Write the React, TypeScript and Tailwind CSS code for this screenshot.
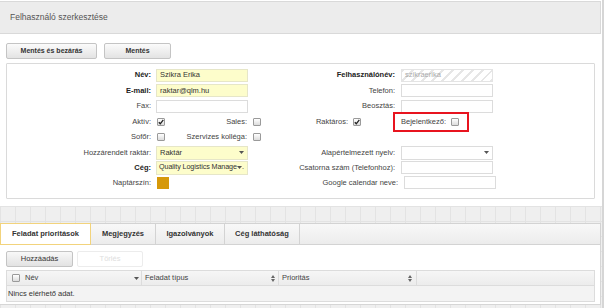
import React from "react";

const Check = ({ checked = false }: { checked?: boolean }) => (
  <span className="inline-flex items-center justify-center w-[8px] h-[8px] border border-[#9a9a9a] rounded-[1px] bg-gradient-to-b from-white to-[#dcdcdc] shrink-0">
    {checked && (
      <svg width="6" height="6" viewBox="0 0 6 6">
        <path d="M0.8 3.2 L2.3 4.8 L5.3 0.9" stroke="#222" strokeWidth="1.3" fill="none" />
      </svg>
    )}
  </span>
);

const Arrow = () => (
  <svg width="5" height="3" viewBox="0 0 5 3" className="shrink-0">
    <path d="M0 0 L5 0 L2.5 3 Z" fill="#555" />
  </svg>
);

const SortBoth = () => (
  <svg width="4" height="7" viewBox="0 0 4 7" className="shrink-0">
    <path d="M0 3 L4 3 L2 0 Z" fill="#666" />
    <path d="M0 4 L4 4 L2 7 Z" fill="#666" />
  </svg>
);

const Label = ({ w, children, bold = false }: { w: string; children: React.ReactNode; bold?: boolean }) => (
  <div className={`${w} shrink-0 text-right whitespace-nowrap ${bold ? "font-bold text-[#222]" : "text-[#444]"}`}>{children}</div>
);

const YInput = ({ value }: { value?: string }) => (
  <div className="w-[92px] h-[13px] border border-[#e6e6c8] bg-[#fdfdcb] px-[3px] flex items-center text-[#333] shrink-0 whitespace-nowrap overflow-hidden">
    {value}
  </div>
);

const WInput = () => (
  <div className="w-[92px] h-[13px] border border-[#dcdcdc] bg-white shrink-0" />
);

export default function App() {
  return (
    <div className="w-[604px] h-[308px] overflow-hidden bg-white font-['Liberation_Sans',Arial,sans-serif] text-[7.5px] relative">
      <div className="absolute right-0 top-0 w-[2px] h-full bg-[#d6d6d6]" />
      <div className="w-[602px] pt-[1px]">
        {/* header */}
        <div className="h-[33px] w-[601px] border-t border-b border-r border-[#d9d9d9] bg-[#ececec] flex items-center pl-[10px] text-[8.5px] text-[#555]">
          Felhasználó szerkesztése
        </div>

        {/* top panel */}
        <div className="px-[6px] pt-[9px] pb-[7px]">
          <div className="flex gap-[7px]">
            <div className="w-[91px] h-[16px] border border-[#c4c4c4] rounded-[2px] bg-gradient-to-b from-[#fbfbfb] to-[#e3e3e3] flex items-center justify-center font-bold text-[7px] text-[#333]">
              Mentés és bezárás
            </div>
            <div className="w-[67px] h-[16px] border border-[#c4c4c4] rounded-[2px] bg-gradient-to-b from-[#fbfbfb] to-[#e3e3e3] flex items-center justify-center font-bold text-[7px] text-[#333]">
              Mentés
            </div>
          </div>

          <div className="mt-[4px] w-[589px] border border-[#dadada] rounded-[1px] pt-[3px] pb-[8px]">
            {/* row 1 */}
            <div className="flex items-center h-[16px]">
              <Label w="w-[144px]" bold>Név:</Label>
              <div className="w-[5px]" />
              <YInput value="Szikra Erika" />
              <Label w="w-[147px]" bold>Felhasználónév:</Label>
              <div className="w-[6px]" />
              <div className="w-[92px] h-[13px] border border-[#e4e4e4] px-[3px] flex items-center text-[#aaa] bg-[repeating-linear-gradient(135deg,#e6e6e6_0px,#e6e6e6_2px,#ffffff_2px,#ffffff_7px)]">
                szikraerika
              </div>
            </div>
            {/* row 2 */}
            <div className="flex items-center h-[15px]">
              <Label w="w-[144px]" bold>E-mail:</Label>
              <div className="w-[5px]" />
              <YInput value="raktar@qlm.hu" />
              <Label w="w-[147px]">Telefon:</Label>
              <div className="w-[6px]" />
              <WInput />
            </div>
            {/* row 3 */}
            <div className="flex items-center h-[16px]">
              <Label w="w-[144px]">Fax:</Label>
              <div className="w-[5px]" />
              <WInput />
              <Label w="w-[147px]">Beosztás:</Label>
              <div className="w-[6px]" />
              <WInput />
            </div>
            {/* row 4 */}
            <div className="flex items-center h-[15px]">
              <Label w="w-[144px]">Aktív:</Label>
              <div className="w-[6px]" />
              <Check checked />
              <Label w="w-[82px]">Sales:</Label>
              <div className="w-[6px]" />
              <Check />
              <Label w="w-[87px]">Raktáros:</Label>
              <div className="w-[5px]" />
              <Check checked />
              <div className="w-[32px]" />
              <div className="w-[76px] h-[20px] -my-[3px] border-2 border-[#e8141f] flex items-center shrink-0">
                <Label w="w-[51px]">Bejelentkező:</Label>
                <div className="w-[5px]" />
                <Check />
              </div>
            </div>
            {/* row 5 */}
            <div className="flex items-center h-[16px]">
              <Label w="w-[144px]">Sofőr:</Label>
              <div className="w-[6px]" />
              <Check />
              <Label w="w-[82px]">Szervizes kolléga:</Label>
              <div className="w-[6px]" />
              <Check />
            </div>
            {/* row 6 */}
            <div className="flex items-center h-[15px]">
              <Label w="w-[144px]">Hozzárendelt raktár:</Label>
              <div className="w-[5px]" />
              <div className="w-[92px] h-[14px] border border-[#e6e6c8] bg-[#fdfdcb] pl-[3px] pr-[3px] flex items-center justify-between text-[#333] shrink-0">
                <span>Raktár</span>
                <Arrow />
              </div>
              <Label w="w-[147px]">Alapértelmezett nyelv:</Label>
              <div className="w-[6px]" />
              <div className="w-[92px] h-[14px] border border-[#dcdcdc] bg-white pr-[3px] flex items-center justify-end shrink-0">
                <Arrow />
              </div>
            </div>
            {/* row 7 */}
            <div className="flex items-center h-[15px]">
              <Label w="w-[144px]" bold>Cég:</Label>
              <div className="w-[5px]" />
              <div className="w-[92px] h-[14px] border border-[#e6e6c8] bg-[#fdfdcb] pl-[2px] pr-[1px] flex items-center text-[#333] text-[7.2px] tracking-[-0.1px] shrink-0 whitespace-nowrap">
                <span>Quality Logistics Manage</span>
                <Arrow />
                <span>.</span>
              </div>
              <Label w="w-[147px]">Csatorna szám (Telefonhoz):</Label>
              <div className="w-[6px]" />
              <WInput />
            </div>
            {/* row 8 */}
            <div className="flex items-center h-[15px]">
              <Label w="w-[144px]">Naptárszín:</Label>
              <div className="w-[6px]" />
              <div className="w-[12px] h-[12px] bg-[#d6990a] shrink-0" />
              <Label w="w-[229px]">Google calendar neve:</Label>
              <div className="w-[6px]" />
              <WInput />
            </div>
          </div>
        </div>
      </div>

      {/* lower area */}
      <div className="w-[604px] h-[103px] pt-[17px] bg-[#efefef] bg-[linear-gradient(to_right,#e3e3e3_1px,transparent_1px),linear-gradient(to_bottom,#e3e3e3_1px,transparent_1px)] bg-size-[15px_15px]">
        <div className="w-[601px]">
          <div className="h-[22px] flex border-t border-b border-r border-[#d3d3d3] bg-gradient-to-b from-[#f8f8f8] to-[#ececec]">
            <div className="w-[91px] -my-[1px] h-[22px] border border-[#f2d37c] bg-white flex items-center justify-center font-bold text-[#333]">
              Feladat prioritások
            </div>
            <div className="w-[65px] border-r border-[#d3d3d3] flex items-center justify-center font-bold text-[#333]">
              Megjegyzés
            </div>
            <div className="w-[69px] border-r border-[#d3d3d3] flex items-center justify-center font-bold text-[#333]">
              Igazolványok
            </div>
            <div className="w-[75px] border-r border-[#d3d3d3] flex items-center justify-center font-bold text-[#333]">
              Cég láthatóság
            </div>
          </div>
          <div className="h-[60px] bg-white border-r border-b border-[#d6d6d6] px-[6px] pt-[6px]">
            <div className="flex gap-[4px]">
              <div className="w-[67px] h-[16px] border border-[#c4c4c4] rounded-[2px] bg-gradient-to-b from-[#f8f8f8] to-[#e2e2e2] flex items-center justify-center text-[#333]">
                Hozzáadás
              </div>
              <div className="w-[66px] h-[16px] border border-[#ececec] rounded-[2px] bg-white flex items-center justify-center text-[#dedede]">
                Törlés
              </div>
            </div>
            <div className="mt-[3px] w-[589px]">
              <div className="h-[16px] flex items-center border border-[#dcdcdc] bg-gradient-to-b from-[#f6f6f6] to-[#ececec] text-[#444]">
                <div className="w-[135px] flex items-center pl-[5px] gap-[5px] h-full border-r border-[#dcdcdc] relative">
                  <Check />
                  <span>Név</span>
                  <span className="absolute right-[2px] top-[6px]"><Arrow /></span>
                </div>
                <div className="w-[137px] flex items-center justify-between pl-[3px] pr-[3px] h-full border-r border-[#dcdcdc]">
                  <span>Feladat típus</span>
                  <SortBoth />
                </div>
                <div className="w-[138px] flex items-center justify-between pl-[3px] pr-[4px] h-full border-r border-[#dcdcdc]">
                  <span>Prioritás</span>
                  <SortBoth />
                </div>
                <div className="flex-1" />
              </div>
              <div className="h-[16px] flex items-center border border-t-0 border-[#dcdcdc] bg-[#f3f3f3] pl-[1px] text-[#333]">
                Nincs elérhető adat.
              </div>
            </div>
          </div>
        </div>
      </div>
    </div>
  );
}
